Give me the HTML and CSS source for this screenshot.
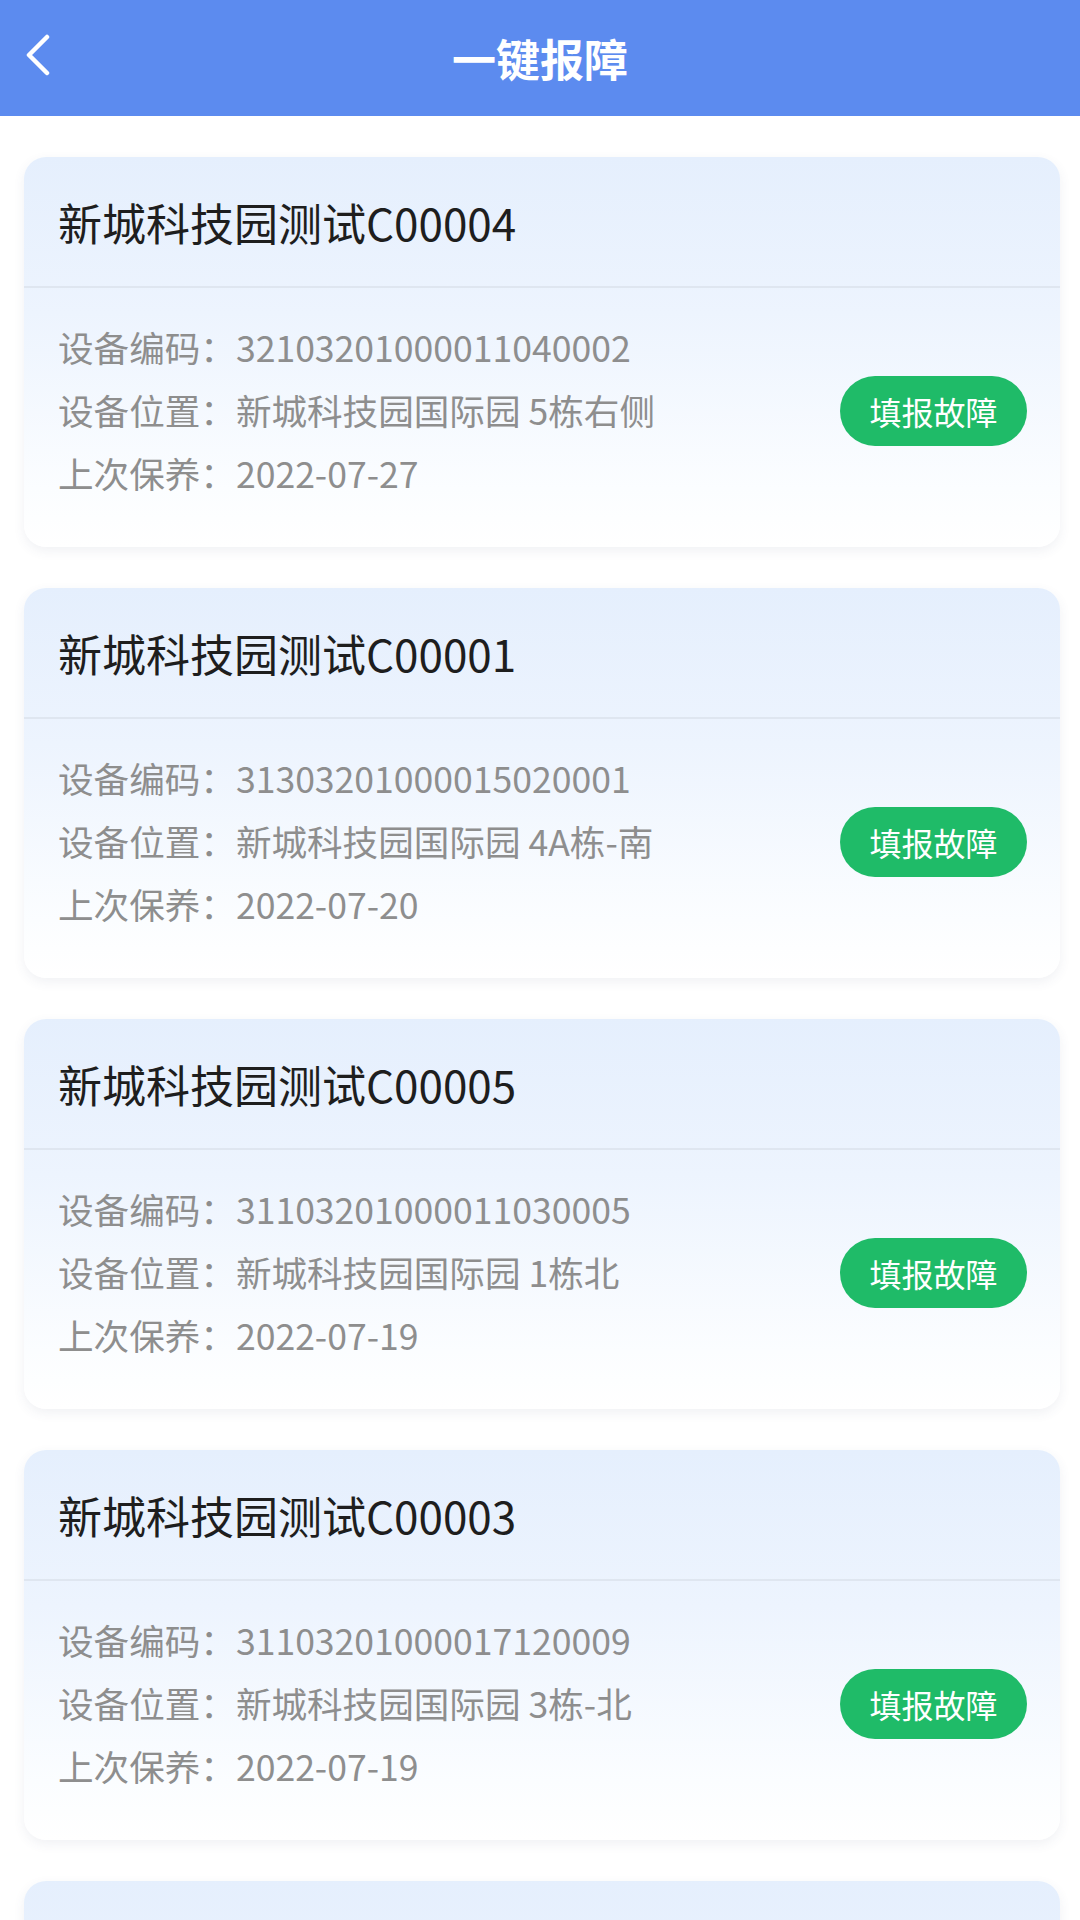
FILE: index.html
```html
<!DOCTYPE html>
<html lang="zh-CN">
<head>
<meta charset="utf-8">
<title>一键报障</title>
<link rel="stylesheet" href="styles.css">
</head>
<body>
<header class="nav">
  <span class="back">
    <svg width="30" height="44" viewBox="0 0 30 44"><polyline points="23,3 5,21 23,39" fill="none" stroke="#fff" stroke-width="4.5" stroke-linecap="round" stroke-linejoin="round"/></svg>
  </span>
  <h1 class="nav-title">一键报障</h1>
</header>
<main class="list">
  <section class="card">
    <div class="card-head">新城科技园测试C00004</div>
    <div class="card-body">
      <div class="info">
        <div class="row">设备编码：32103201000011040002</div>
        <div class="row">设备位置：新城科技园国际园 5栋右侧</div>
        <div class="row">上次保养：2022-07-27</div>
      </div>
      <button class="btn">填报故障</button>
    </div>
  </section>
  <section class="card">
    <div class="card-head">新城科技园测试C00001</div>
    <div class="card-body">
      <div class="info">
        <div class="row">设备编码：31303201000015020001</div>
        <div class="row">设备位置：新城科技园国际园 4A栋-南</div>
        <div class="row">上次保养：2022-07-20</div>
      </div>
      <button class="btn">填报故障</button>
    </div>
  </section>
  <section class="card">
    <div class="card-head">新城科技园测试C00005</div>
    <div class="card-body">
      <div class="info">
        <div class="row">设备编码：31103201000011030005</div>
        <div class="row">设备位置：新城科技园国际园 1栋北</div>
        <div class="row">上次保养：2022-07-19</div>
      </div>
      <button class="btn">填报故障</button>
    </div>
  </section>
  <section class="card">
    <div class="card-head">新城科技园测试C00003</div>
    <div class="card-body">
      <div class="info">
        <div class="row">设备编码：31103201000017120009</div>
        <div class="row">设备位置：新城科技园国际园 3栋-北</div>
        <div class="row">上次保养：2022-07-19</div>
      </div>
      <button class="btn">填报故障</button>
    </div>
  </section>
  <section class="card card-partial"></section>
</main>
</body>
</html>
```
FILE: styles.css
```css
html, body {
  margin: 0;
  padding: 0;
  background: #ffffff;
}
body {
  font-family: "Noto Sans CJK SC", "Noto Sans", sans-serif;
  width: 1080px;
  height: 1920px;
  overflow: hidden;
}
.nav {
  height: 116px;
  background: #5c8bef;
  display: flex;
  align-items: center;
  justify-content: center;
  position: relative;
}
.back {
  position: absolute;
  left: 24px;
  top: 34px;
  width: 30px;
  height: 44px;
  display: flex;
}
.nav-title {
  margin: 0;
  color: #ffffff;
  font-size: 44px;
  font-weight: 700;
  letter-spacing: 0;
}
.list {
  padding: 41px 20px 0 24px;
  display: flex;
  flex-direction: column;
  gap: 41px;
}
.card {
  height: 390px;
  flex: none;
  border-radius: 22px;
  background: linear-gradient(180deg, #e5effd 0%, #edf4fe 40%, #fbfdff 85%, #ffffff 100%);
  box-shadow: 0 4px 12px rgba(60, 80, 110, 0.08);
  display: flex;
  flex-direction: column;
  overflow: hidden;
}
.card-head {
  height: 129px;
  flex: none;
  display: flex;
  align-items: center;
  padding-left: 34px;
  font-size: 44px;
  color: #1e1e1e;
  border-bottom: 2px solid #dfe6f0;
}
.card-body {
  flex: 1;
  display: flex;
  align-items: center;
  justify-content: space-between;
  padding: 27px 33px 43px 34px;
}
.info {
  display: flex;
  flex-direction: column;
}
.row {
  font-size: 35.6px;
  line-height: 63px;
  color: #8e8e8e;
  white-space: nowrap;
}
.btn {
  border: none;
  background: #1fbb68;
  color: #ffffff;
  font-family: "Noto Sans CJK SC", "Noto Sans", sans-serif;
  font-size: 32px;
  height: 70px;
  width: 187px;
  border-radius: 35px;
  padding: 0;
  margin-top: 2px;
}
```
